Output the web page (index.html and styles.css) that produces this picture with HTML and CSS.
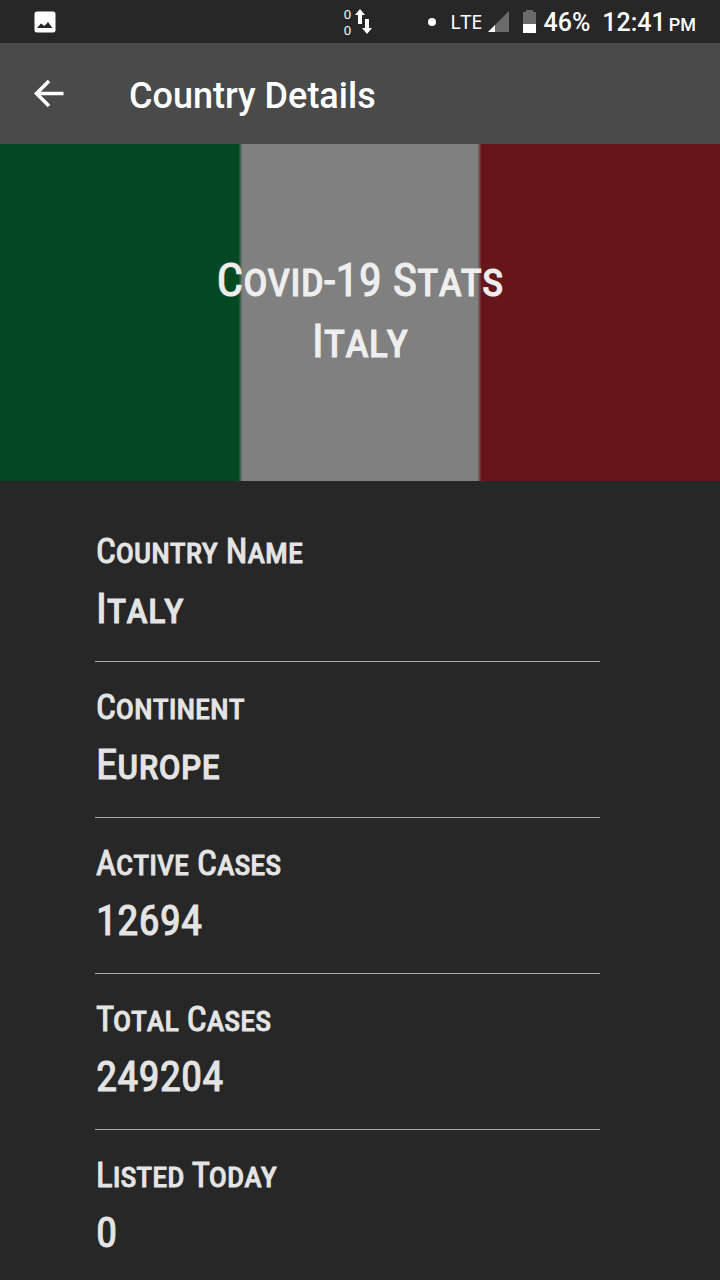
FILE: index.html
```html
<!DOCTYPE html>
<html lang="en">
<head>
<meta charset="utf-8">
<meta name="viewport" content="width=device-width, initial-scale=1">
<title>Country Details</title>
<link rel="stylesheet" href="styles.css">
</head>
<body>
<div class="status">
  <svg class="status-picture" viewBox="0 0 22 22" width="22" height="22" aria-hidden="true"><path fill="#fff" fill-rule="evenodd" d="M3 .5h16a2.500 2.500 0 0 1 2.500 2.500v16a2.500 2.500 0 0 1-2.500 2.500H3A2.500 2.500 0 0 1 .5 19V3A2.500 2.500 0 0 1 3 .5ZM3 17h15.500L14 11l-3.500 4L7 12.500Z"/></svg>
  <div class="traffic">
    <div class="traffic-counts"><span>0</span><span>0</span></div>
    <svg viewBox="0 0 18 26" width="18" height="26" aria-hidden="true"><path fill="#fff" d="M5 0l5 6H7v9H3V6H0ZM12 25l-5-6h3v-9h4v9h3Z"/></svg>
  </div>
  <span class="dot"></span>
  <span class="network">LTE</span>
  <svg class="signal" viewBox="0 0 21 21" width="21" height="21" aria-hidden="true"><path fill="#6b6b6b" d="M21 0v21H0Z"/><path fill="#fff" d="M7 14v7H0Z"/></svg>
  <svg class="battery" viewBox="0 0 13 23" width="13" height="23" aria-hidden="true"><path fill="#6b6b6b" d="M3 0h7v2h3v12H0V2h3Z"/><path fill="#fff" d="M0 14h13v9H0Z"/></svg>
  <span class="percent">46%</span>
  <span class="clock"><span>12:41</span><small>PM</small></span>
</div>
<header class="toolbar">
  <button class="back" type="button" aria-label="Back"><svg viewBox="0 0 30 28" width="30" height="28" aria-hidden="true"><path d="M15 1 2.500 13.500 15 26M3 13.500h26.500" fill="none" stroke="#fff" stroke-width="3.600"/></svg></button>
  <h1 class="title">Country Details</h1>
</header>
<section class="flag">
  <h2 class="flag-title">Covid-19 Stats<br>Italy</h2>
</section>
<dl class="details">
  <div class="row"><dt>Country Name</dt><dd>Italy</dd></div>
  <div class="row"><dt>Continent</dt><dd>Europe</dd></div>
  <div class="row"><dt>Active Cases</dt><dd>12694</dd></div>
  <div class="row"><dt>Total Cases</dt><dd>249204</dd></div>
  <div class="row"><dt>Listed Today</dt><dd>0</dd></div>
</dl>
</body>
</html>
```
FILE: styles.css
```css
* { box-sizing: border-box; }
body {
  margin: 0;
  background: #272727;
  color: #e4e4e4;
  font-family: Roboto, "Liberation Sans", sans-serif;
}
.status {
  display: flex;
  align-items: center;
  height: 43px;
  padding: 0 24px 0 34px;
  color: #fff;
  font-size: 25px;
  font-weight: 500;
  white-space: nowrap;
}
.traffic {
  display: flex;
  align-items: center;
  gap: 4px;
  margin-left: auto;
}
.traffic-counts {
  display: flex;
  flex-direction: column;
  font: 400 13px/16px "Noto Sans", sans-serif;
}
.dot {
  width: 8px;
  height: 8px;
  margin-left: 55px;
  border-radius: 50%;
  background: #fff;
}
.network {
  margin: 0 5px 0 14px;
  font: 400 20px/24px "Noto Sans", sans-serif;
}
.battery { margin: 0 8px 0 14px; }
.percent, .clock { padding-top: 2px; }
.clock {
  display: flex;
  align-items: baseline;
  gap: 3px;
  margin-left: 12px;
}
.clock small { font-size: 18px; }
.toolbar {
  display: flex;
  align-items: center;
  height: 101px;
  padding: 0 34px;
  background: #4a4a4a;
  color: #fff;
}
.back {
  display: flex;
  padding: 0;
  border: 0;
  background: none;
}
.title {
  margin: 4px 0 0 65px;
  font-size: 36px;
  line-height: 44px;
  font-weight: 500;
}
.flag {
  display: flex;
  align-items: center;
  justify-content: center;
  height: 337px;
  padding-bottom: 6px;
  background: linear-gradient(90deg, #004923 33.100%, #808080 33.700%, #808080 66.300%, #66151a 66.900%);
}
.flag-title,
.details {
  font-family: "Roboto Condensed", Roboto, sans-serif;
  font-variant: small-caps;
  font-weight: 400;
  -webkit-text-stroke: 1px currentColor;
}
.flag-title {
  margin: 0;
  color: #eee;
  font-size: 47px;
  line-height: 61px;
  text-align: center;
}
.details {
  margin: 0;
  padding: 25px 120px 0 95px;
}
.row {
  height: 156px;
  padding: 24px 0 0 1px;
  border-bottom: 1px solid #aaa;
}
.row:last-child { border-bottom: 0; height: 149px; }
.row dt {
  font-size: 35px;
  line-height: 44px;
}
.row dd {
  margin: 4px 0 0;
  font-size: 43px;
  line-height: 60px;
}
```
